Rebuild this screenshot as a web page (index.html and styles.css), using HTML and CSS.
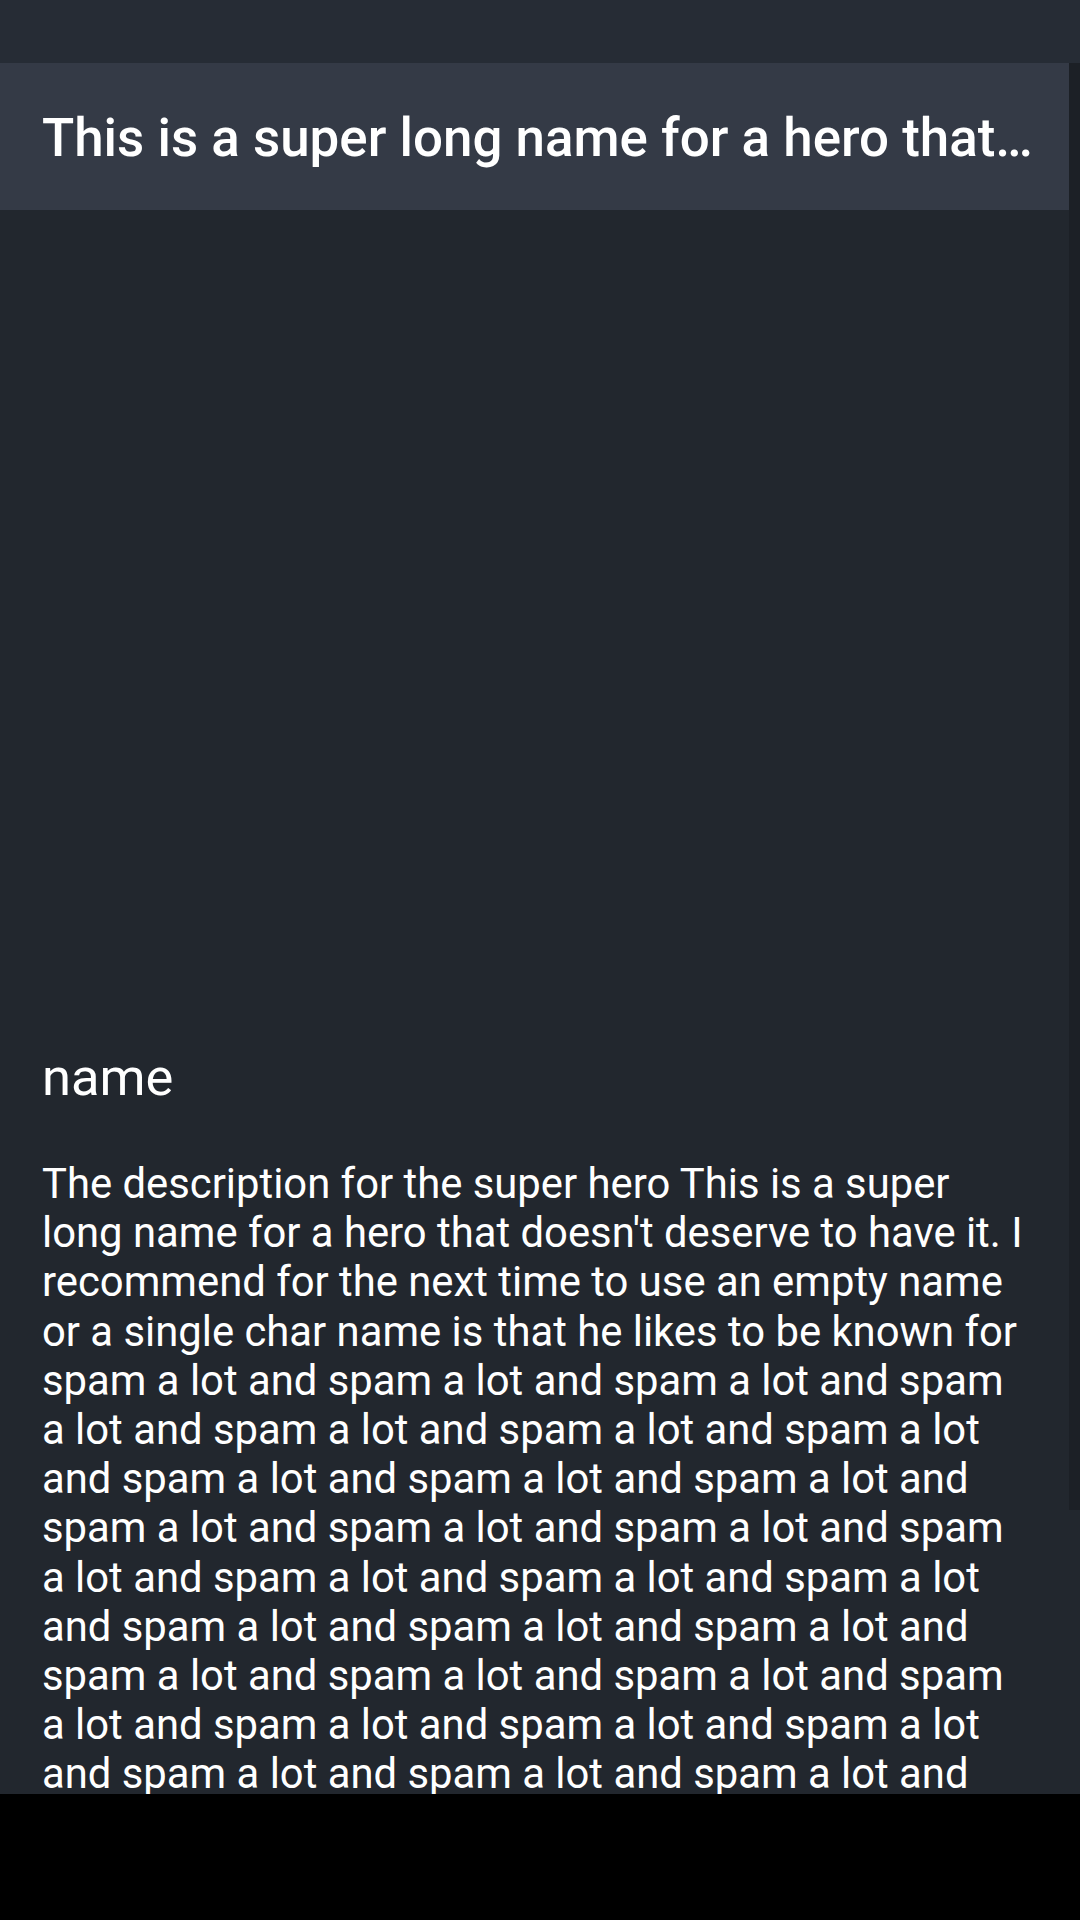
FILE: index.html
```html
<!DOCTYPE html>
<html lang="en">
<head>
<meta charset="utf-8">
<title>Hero</title>
<link rel="stylesheet" href="styles.css">
</head>
<body>
<div class="screen">
  <div class="status-bar"></div>
  <div class="viewport">
    <header class="app-bar">
      <h1 class="app-title">This is a super long name for a hero that doesn't deserve to have it. I recommend for the next time to use an empty name</h1>
    </header>
    <main class="content">
      <div class="hero-image"></div>
      <h2 class="hero-name">name</h2>
      <p class="hero-desc">The description for the super hero This is a super long name for a hero that doesn't deserve to have it. I recommend for the next time to use an empty name or a single char name is that he likes to be known for spam a lot and spam a lot and spam a lot and spam a lot and spam a lot and spam a lot and spam a lot and spam a lot and spam a lot and spam a lot and spam a lot and spam a lot and spam a lot and spam a lot and spam a lot and spam a lot and spam a lot and spam a lot and spam a lot and spam a lot and spam a lot and spam a lot and spam a lot and spam a lot and spam a lot and spam a lot and spam a lot and spam a lot and spam a lot and spam a lot and spam a lot and spam a lot and spam a lot and spam a lot and spam a lot and spam a lot and spam a lot and spam a lot and spam a lot and spam a lot and spam a lot and spam a lot and spam a lot and spam a lot and spam a lot and spam a lot.</p>
    </main>
    <div class="scroll-thumb"></div>
  </div>
  <div class="nav-bar"></div>
</div>
</body>
</html>
```
FILE: styles.css
```css
* { box-sizing: border-box; }
html, body {
  margin: 0;
  padding: 0;
  background: #000;
}
.screen {
  width: 1080px;
  height: 1920px;
  display: flex;
  flex-direction: column;
  overflow: hidden;
  font-family: Roboto, "Noto Sans", sans-serif;
  color: #ffffff;
}
.status-bar {
  height: 63px;
  flex: none;
  background: #262c35;
}
.viewport {
  position: relative;
  flex: 1;
  background: #22272e;
  overflow: hidden;
  display: flex;
  flex-direction: column;
}
.app-bar {
  height: 147px;
  flex: none;
  width: 1069px;
  background: #343a46;
  display: flex;
  align-items: center;
  padding: 3px 34px 0 42px;
}
.app-title {
  margin: 0;
  font-size: 52.9px;
  font-weight: 500;
  white-space: nowrap;
  overflow: hidden;
  text-overflow: ellipsis;
  min-width: 0;
  flex: 1;
}
.content {
  width: 1069px;
  padding: 0 34px 0 42px;
}
.hero-image {
  height: 836px;
}
.hero-name {
  margin: 0;
  font-size: 52.5px;
  font-weight: 400;
  line-height: normal;
}
.hero-desc {
  margin: 51px 0 0;
  font-size: 41.8px;
  line-height: 49.2px;
}
.scroll-thumb {
  position: absolute;
  top: 0;
  right: 0;
  width: 11px;
  height: 1447px;
  background: rgba(0, 0, 0, 0.16);
}
.nav-bar {
  height: 126px;
  flex: none;
  background: #000;
}
```
